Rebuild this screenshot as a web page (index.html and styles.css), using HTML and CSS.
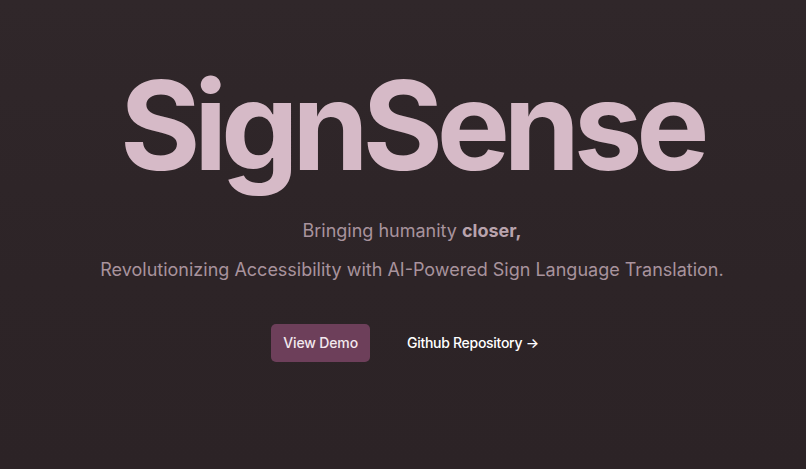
FILE: index.html
```html
<!DOCTYPE html>
<html lang="en">
<head>
<meta charset="utf-8">
<title>SignSense</title>
<link rel="stylesheet" href="styles.css">
</head>
<body>
<main class="hero">
  <h1 class="title">SignSense</h1>
  <p class="tagline">Bringing humanity <strong>closer,</strong></p>
  <p class="lead">Revolutionizing Accessibility with AI-Powered Sign Language Translation.</p>
  <div class="actions">
    <a class="btn-primary" href="#">View Demo</a>
    <a class="btn-link" href="#">Github Repository <span class="arrow">→</span></a>
  </div>
</main>
</body>
</html>
```
FILE: styles.css
```css
html, body {
  margin: 0;
  padding: 0;
  height: 100%;
}
body {
  background: linear-gradient(180deg, #30272a 0%, #2d2427 60%, #2c2326 100%);
  font-family: Inter, "Noto Sans", sans-serif;
  color: #a8939d;
}
.hero {
  display: flex;
  flex-direction: column;
  align-items: center;
  padding-top: 46px;
}
.title {
  margin: 0;
  padding-left: 17px;
  font-size: 123px;
  font-weight: 700;
  letter-spacing: -0.052em;
  line-height: 160px;
  color: #d6bac7;
}
.tagline {
  margin: 11px 0 0;
  padding-left: 18px;
  font-size: 18px;
  line-height: 28px;
}
.tagline strong {
  font-weight: 700;
  color: #b9a3ad;
}
.lead {
  margin: 11px 0 0;
  padding-left: 18px;
  font-size: 18px;
  line-height: 28px;
}
.actions {
  display: flex;
  align-items: center;
  gap: 37px;
  margin-top: 40px;
  padding-left: 4px;
}
.btn-primary {
  display: block;
  background: #6d3f5a;
  color: #f3e8ee;
  text-decoration: none;
  font-size: 14px;
  font-weight: 500;
  letter-spacing: -0.01em;
  padding: 10px 12px;
  line-height: 18px;
  border-radius: 5px;
}
.btn-link {
  color: #ffffff;
  text-decoration: none;
  font-size: 14px;
  font-weight: 500;
  letter-spacing: -0.02em;
  line-height: 18px;
}
```
